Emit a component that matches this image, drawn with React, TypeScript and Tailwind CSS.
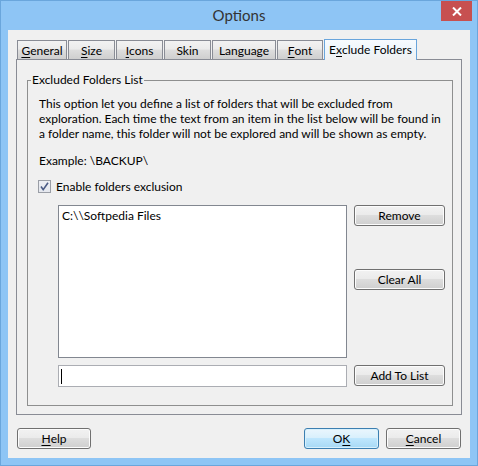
import React from "react";

const btn =
  "flex items-center justify-center h-[21px] rounded-[3px] border border-[#707070] bg-[linear-gradient(to_bottom,#f2f2f2_0%,#ebebeb_45%,#dddddd_50%,#cfcfcf_100%)] shadow-[inset_0_0_0_1px_#fcfcfc] text-[12px] text-black";

function Tab({ children, w }: { children: React.ReactNode; w: string }) {
  return (
    <div
      className={`${w} h-[19px] flex items-center justify-center border border-b-0 border-[#898c95] bg-[linear-gradient(to_bottom,#f2f2f2_0%,#ebebeb_45%,#dddddd_50%,#cfcfcf_100%)] text-black`}
    >
      {children}
    </div>
  );
}

function U({ children }: { children: React.ReactNode }) {
  return <span className="underline underline-offset-[2px] decoration-1">{children}</span>;
}

export default function App() {
  return (
    <div className="w-[478px] h-[466px] bg-[#8ec5f5] border border-[#6aa6dc] flex flex-col [font-family:Lato,sans-serif] text-[12px] leading-[15px] text-black">
      {/* title bar */}
      <div className="relative h-[29px] flex items-center justify-center">
        <span className="text-[15px] text-[#333] [font-family:Lato,sans-serif]">Options</span>
        <div className="absolute right-[5px] top-0 w-[31px] h-[20px] bg-[#c75050] flex items-center justify-center">
          <svg width="10" height="9" viewBox="0 0 10 9">
            <path d="M1 0.5 L9 8.5 M9 0.5 L1 8.5" stroke="#fff" strokeWidth="2" />
          </svg>
        </div>
      </div>

      {/* client */}
      <div className="mx-[7px] h-[428px] bg-[#f0f0f0] pt-[9px] px-[8px] flex flex-col">
        {/* tabs */}
        <div className="flex items-end h-[20px] gap-[1px] ml-[1px]">
          <Tab w="w-[50px]"><U>G</U>eneral</Tab>
          <Tab w="w-[47px]"><U>S</U>ize</Tab>
          <Tab w="w-[47px]"><U>I</U>cons</Tab>
          <Tab w="w-[47px]">Skin</Tab>
          <Tab w="w-[64px]">Language</Tab>
          <Tab w="w-[46px]"><U>F</U>ont</Tab>
          <div className="relative z-10 w-[93px] h-[21px] -mb-[1px] flex items-center justify-center border border-b-0 border-[#69a5dc] bg-[linear-gradient(to_bottom,#f7fbfe_0%,#eef6fc_50%,#f0f0f0_100%)] pb-[1px]">
            E<U>x</U>clude Folders
          </div>
        </div>

        {/* panel */}
        <div className="h-[356px] border border-[#898c95] bg-[#f0f0f0] pt-[20px] pl-[10px] pr-[8px]">
          <div className="relative h-[326px] border border-[#8e8f8f] pt-[15px] pl-[11px]">
            <span className="absolute left-[3px] top-[-9px] px-[1px] bg-[#f0f0f0]">Excluded Folders List</span>
            <p>
              This option let you define a list of folders that will be excluded from
              <br />
              exploration. Each time the text from an item in the list below will be found in
              <br />
              a folder name, this folder will not be explored and will be shown as empty.
            </p>
            <p className="mt-[12px]">Example: \BACKUP\</p>
            <div className="mt-[11px] h-[15px] flex items-center gap-[5px] -ml-[1px]">
              <svg width="13" height="13" viewBox="0 0 13 13">
                <defs>
                  <linearGradient id="cbg" x1="0" y1="0" x2="0" y2="1">
                    <stop offset="0" stopColor="#eceef3" />
                    <stop offset="1" stopColor="#e4e7ee" />
                  </linearGradient>
                </defs>
                <rect x="0.5" y="0.5" width="12" height="12" fill="url(#cbg)" stroke="#9a9ea6" />
                <path d="M3 6.5 L5.2 9.6 L10 2.8" fill="none" stroke="#4a5a85" strokeWidth="1.6" />
              </svg>
              <span>Enable folders exclusion</span>
            </div>

            <div className="mt-[11px] ml-[19px] grid grid-cols-[289px_91px] grid-rows-[153px_22px] gap-x-[7px] gap-y-[7px]">
              <div className="border border-[#828790] bg-white pl-[3px] pt-[2px]">C:\\Softpedia Files</div>
              <div className="flex flex-col">
                <div className={btn}>Remove</div>
                <div className={`${btn} mt-[43px]`}>Clear All</div>
              </div>
              <div className="border border-[#abadb3] bg-white flex items-center pl-[2px]">
                <div className="w-[1px] h-[15px] bg-black" />
              </div>
              <div className={btn}>Add To List</div>
            </div>
          </div>
        </div>

        {/* bottom buttons */}
        <div className="mt-[13px] flex items-center">
          <div className={`${btn} w-[74px] ml-[1px]`}>
            <U>H</U>elp
          </div>
          <div className="flex-1" />
          <div className="flex items-center gap-[7px] mr-[1px]">
            <div className="flex items-center justify-center w-[75px] h-[21px] rounded-[3px] border border-[#3c7fb1] bg-[linear-gradient(to_bottom,#eaf6fd_0%,#d9f0fc_45%,#bee6fd_50%,#a7d9f5_100%)] shadow-[inset_0_0_0_1px_#d8f0fc]">
              O<U>K</U>
            </div>
            <div className={`${btn} w-[75px]`}>
              <U>C</U>ancel
            </div>
          </div>
        </div>
      </div>
    </div>
  );
}
